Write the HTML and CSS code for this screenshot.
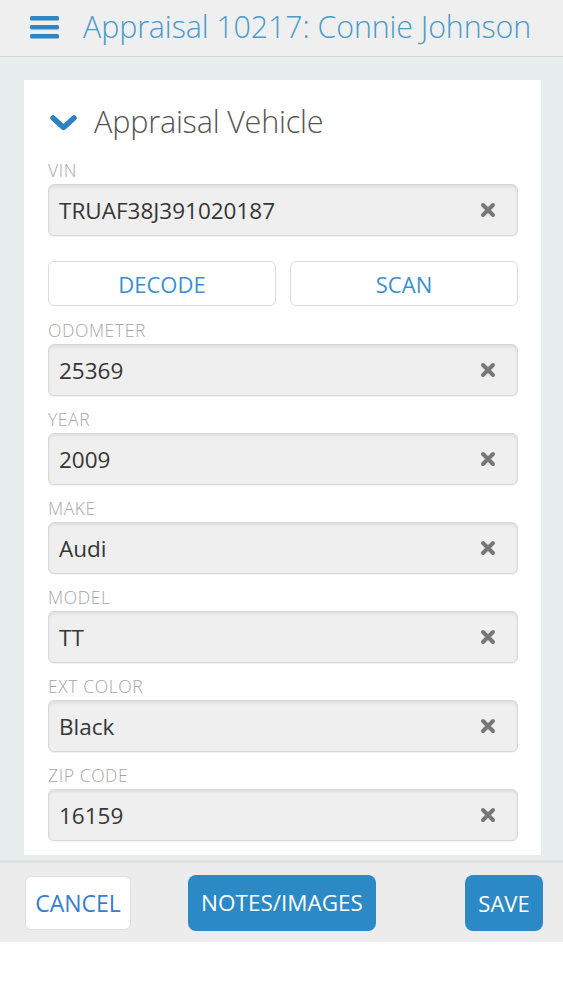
FILE: index.html
```html
<!DOCTYPE html>
<html>
<head>
<meta charset="utf-8">
<link rel="stylesheet" href="styles.css">
</head>
<body>
<div class="app">
  <header class="topbar">
    <svg class="menu" width="29" height="23" viewBox="0 0 29 23"><rect x="0" y="0" width="29" height="4.5" rx="1.5" fill="#2f86c0"/><rect x="0" y="9" width="29" height="4.5" rx="1.5" fill="#2f86c0"/><rect x="0" y="18" width="29" height="4.5" rx="1.5" fill="#2f86c0"/></svg>
    <h1 class="title">Appraisal 10217: Connie Johnson</h1>
  </header>
  <main class="content">
    <section class="card">
      <div class="section-head">
        <svg class="chev" width="27" height="16" viewBox="0 0 27 16"><path d="M3 3 L13.5 12.5 L24 3" fill="none" stroke="#2a83c0" stroke-width="5.5" stroke-linecap="round" stroke-linejoin="round"/></svg>
        <h2>Appraisal Vehicle</h2>
      </div>

      <div class="field">
        <label>VIN</label>
        <div class="input"><span>TRUAF38J391020187</span><svg class="clr" width="16" height="16" viewBox="0 0 16 16"><path d="M3 3 L13 13 M13 3 L3 13" stroke="#777" stroke-width="4" stroke-linecap="round"/></svg></div>
      </div>
      <div class="btn-row">
        <button class="btn-outline">DECODE</button>
        <button class="btn-outline">SCAN</button>
      </div>

      <div class="field">
        <label>ODOMETER</label>
        <div class="input"><span>25369</span><svg class="clr" width="16" height="16" viewBox="0 0 16 16"><path d="M3 3 L13 13 M13 3 L3 13" stroke="#777" stroke-width="4" stroke-linecap="round"/></svg></div>
      </div>
      <div class="field">
        <label>YEAR</label>
        <div class="input"><span>2009</span><svg class="clr" width="16" height="16" viewBox="0 0 16 16"><path d="M3 3 L13 13 M13 3 L3 13" stroke="#777" stroke-width="4" stroke-linecap="round"/></svg></div>
      </div>
      <div class="field">
        <label>MAKE</label>
        <div class="input"><span>Audi</span><svg class="clr" width="16" height="16" viewBox="0 0 16 16"><path d="M3 3 L13 13 M13 3 L3 13" stroke="#777" stroke-width="4" stroke-linecap="round"/></svg></div>
      </div>
      <div class="field">
        <label>MODEL</label>
        <div class="input"><span>TT</span><svg class="clr" width="16" height="16" viewBox="0 0 16 16"><path d="M3 3 L13 13 M13 3 L3 13" stroke="#777" stroke-width="4" stroke-linecap="round"/></svg></div>
      </div>
      <div class="field">
        <label>EXT COLOR</label>
        <div class="input"><span>Black</span><svg class="clr" width="16" height="16" viewBox="0 0 16 16"><path d="M3 3 L13 13 M13 3 L3 13" stroke="#777" stroke-width="4" stroke-linecap="round"/></svg></div>
      </div>
      <div class="field last">
        <label>ZIP CODE</label>
        <div class="input"><span>16159</span><svg class="clr" width="16" height="16" viewBox="0 0 16 16"><path d="M3 3 L13 13 M13 3 L3 13" stroke="#777" stroke-width="4" stroke-linecap="round"/></svg></div>
      </div>
    </section>
  </main>
  <footer class="bottombar">
    <div class="left"><button class="btn-cancel">CANCEL</button></div>
    <button class="btn-primary notes">NOTES/IMAGES</button>
    <div class="right"><button class="btn-primary save">SAVE</button></div>
  </footer>
</div>
</body>
</html>
```

FILE: styles.css
```css
* { box-sizing: border-box; }
html, body { margin: 0; padding: 0; background: #ffffff; }
body { font-family: "Open Sans", "Liberation Sans", sans-serif; }

.app { width: 563px; display: flex; flex-direction: column; }

.topbar {
  height: 57px;
  background: #efefef;
  border-bottom: 1px solid #d6d8d8;
  display: flex;
  align-items: center;
  padding-left: 30px;
  gap: 24px;
}
.menu { display: block; margin-top: -1px; }
.title {
  margin: 0;
  font-size: 30.4px;
  font-weight: 300;
  color: #4a9acb;
  letter-spacing: -0.1px;
  white-space: nowrap;
  margin-top: -4px;
}

.content {
  background: #e8eded;
  padding: 23px 22px 0 24px;
  height: 803px;
  overflow: hidden;
}
.card {
  background: #ffffff;
  height: 775px;
  padding: 24px 23px 0 24px;
}
.section-head {
  display: flex;
  align-items: center;
  gap: 17px;
  height: 36px;
  padding-left: 2px;
  margin-bottom: 20px;
}
.chev { display: block; margin-top: 1px; }
.section-head h2 {
  margin: 0;
  font-size: 30.6px;
  font-weight: 300;
  color: #555555;
  letter-spacing: -0.2px;
  margin-top: -3px;
}

.field { margin-bottom: 13px; }
.field label {
  display: block;
  height: 20px;
  line-height: 20px;
  font-size: 17.5px;
  font-weight: 300;
  letter-spacing: 0.6px;
  color: #a6a6a6;
  margin-bottom: 4px;
}
.input {
  height: 52px;
  background: #efefef;
  border: 1px solid #d8d8d8;
  border-radius: 6px;
  box-shadow: inset 0 2px 3px rgba(0,0,0,0.07), 0 1px 1px rgba(0,0,0,0.05);
  display: flex;
  align-items: center;
  justify-content: space-between;
  padding: 0 21px 0 10px;
  font-size: 22.5px;
  color: #363636;
}
.clr { display: block; }

.btn-row {
  display: grid;
  grid-template-columns: 1fr 1fr;
  gap: 14px;
  margin-top: 25px;
  margin-bottom: 14px;
}
button { font-family: inherit; cursor: pointer; }
.btn-outline {
  height: 45px;
  background: #ffffff;
  border: 1px solid #dcdcdc;
  border-radius: 6px;
  color: #3a8fd3;
  font-size: 22px;
  font-weight: 400;
  padding: 0;
}

.bottombar {
  height: 82px;
  background: #ececec;
  border-top: 3px solid #dfe2e2;
  display: grid;
  grid-template-columns: 1fr auto 1fr;
  align-items: center;
  padding: 0 20px 0 25px;
}
.left { display: flex; justify-content: flex-start; }
.right { display: flex; justify-content: flex-end; }
.btn-cancel {
  width: 106px;
  height: 54px;
  background: #ffffff;
  border: 1px solid #e0e0e0;
  border-radius: 6px;
  color: #3480cc;
  font-size: 23px;
  font-weight: 400;
  padding: 0;
}
.btn-primary {
  height: 56px;
  background: #2b8ac6;
  border: none;
  border-radius: 8px;
  color: #ffffff;
  font-size: 22.5px;
  font-weight: 400;
  padding: 0;
}
.btn-primary.notes { width: 188px; margin-left: -4px; }
.btn-primary.save { width: 78px; font-size: 22px; }
```
